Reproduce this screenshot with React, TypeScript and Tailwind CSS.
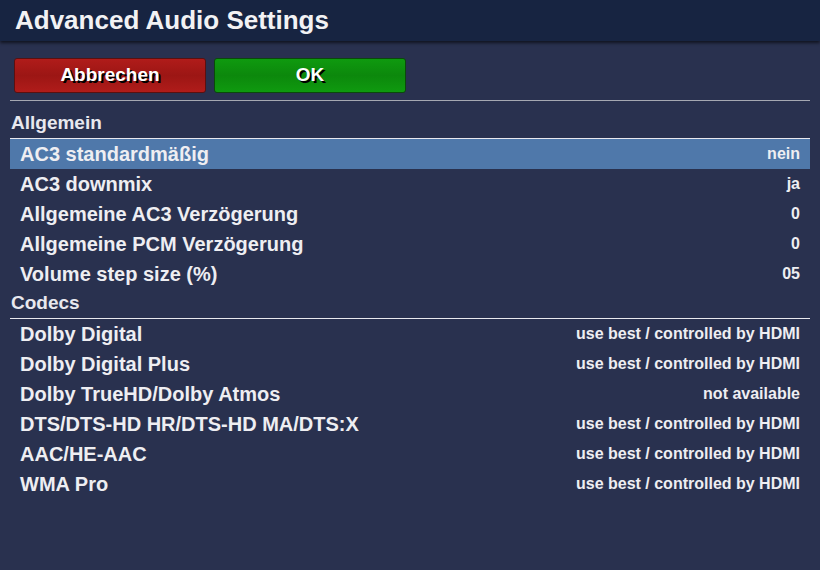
import React from 'react';

type Row = { label: string; value: string; selected?: boolean };

const general: Row[] = [
  { label: 'AC3 standardmäßig', value: 'nein', selected: true },
  { label: 'AC3 downmix', value: 'ja' },
  { label: 'Allgemeine AC3 Verzögerung', value: '0' },
  { label: 'Allgemeine PCM Verzögerung', value: '0' },
  { label: 'Volume step size (%)', value: '05' },
];

const codecs: Row[] = [
  { label: 'Dolby Digital', value: 'use best / controlled by HDMI' },
  { label: 'Dolby Digital Plus', value: 'use best / controlled by HDMI' },
  { label: 'Dolby TrueHD/Dolby Atmos', value: 'not available' },
  { label: 'DTS/DTS-HD HR/DTS-HD MA/DTS:X', value: 'use best / controlled by HDMI' },
  { label: 'AAC/HE-AAC', value: 'use best / controlled by HDMI' },
  { label: 'WMA Pro', value: 'use best / controlled by HDMI' },
];

const SectionHeader: React.FC<{ title: string }> = ({ title }) => (
  <div className="h-[30px] flex items-center pl-px border-b border-[#e8e8ee] text-[19px] font-bold text-[#e8e8ee]">
    {title}
  </div>
);

const SettingRow: React.FC<{ row: Row }> = ({ row }) => (
  <div
    className={`h-[30px] flex items-center justify-between pl-[10px] pr-[10px] text-[#eeeef2] ${
      row.selected ? 'bg-[#4f78aa]' : ''
    }`}
  >
    <span className="text-[20px] font-bold">{row.label}</span>
    <span className="text-[16px] font-bold">{row.value}</span>
  </div>
);

const App: React.FC = () => {
  return (
    <div className="w-[820px] h-[570px] bg-[#29314f] overflow-hidden font-['Liberation_Sans',Arial,sans-serif]">
      {/* Title bar */}
      <div className="h-[41px] bg-[#172441] flex items-center pl-[15px] shadow-[0_2px_3px_rgba(0,0,0,0.6)] relative">
        <h1 className="text-[26px] font-bold text-[#f2f2f4]">Advanced Audio Settings</h1>
      </div>

      {/* Buttons */}
      <div className="flex gap-[8px] pl-[14px] pt-[17px]">
        <button className="w-[192px] h-[35px] rounded-[3px] border border-[#5a1010] bg-gradient-to-b from-[#b01c1a] via-[#9c1614] to-[#b01c1a] text-[19px] font-bold text-white [text-shadow:2px_2px_0_#000]">
          Abbrechen
        </button>
        <button className="w-[192px] h-[35px] rounded-[3px] border border-[#0a4a0a] bg-gradient-to-b from-[#0f9a0f] via-[#0c880c] to-[#0f9a0f] text-[19px] font-bold text-white [text-shadow:2px_2px_0_#000]">
          OK
        </button>
      </div>

      {/* Settings list */}
      <div className="mx-[10px] mt-[7px] border-t border-[#a5a8b2] pt-[8px]">
        <SectionHeader title="Allgemein" />
        {general.map((r) => (
          <SettingRow key={r.label} row={r} />
        ))}
        <SectionHeader title="Codecs" />
        {codecs.map((r) => (
          <SettingRow key={r.label} row={r} />
        ))}
      </div>
    </div>
  );
};

export default App;
